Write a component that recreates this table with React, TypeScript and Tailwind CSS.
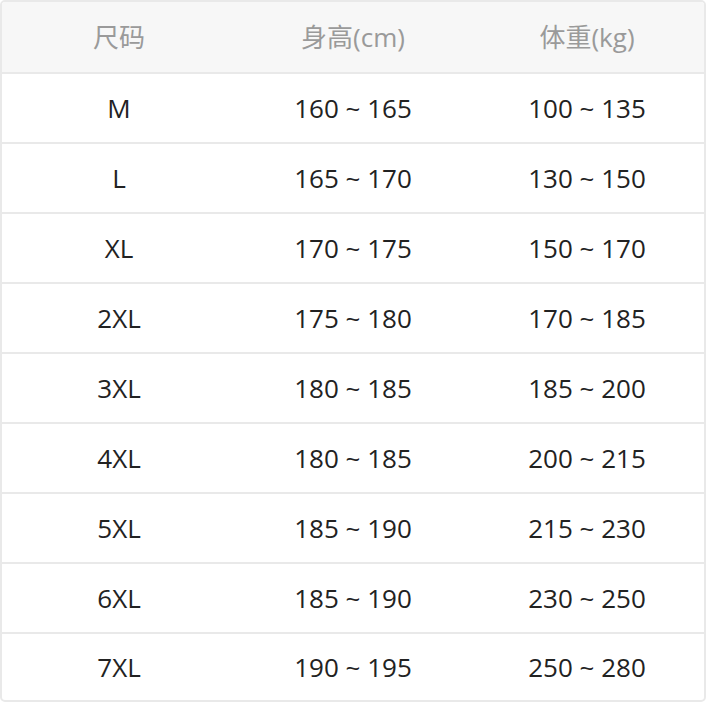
import React from "react";

const rows: [string, string, string][] = [
  ["M", "160 ~ 165", "100 ~ 135"],
  ["L", "165 ~ 170", "130 ~ 150"],
  ["XL", "170 ~ 175", "150 ~ 170"],
  ["2XL", "175 ~ 180", "170 ~ 185"],
  ["3XL", "180 ~ 185", "185 ~ 200"],
  ["4XL", "180 ~ 185", "200 ~ 215"],
  ["5XL", "185 ~ 190", "215 ~ 230"],
  ["6XL", "185 ~ 190", "230 ~ 250"],
  ["7XL", "190 ~ 195", "250 ~ 280"],
];

export default function App() {
  return (
    <div
      className="w-[706px] h-[702px] bg-white"
      style={{ fontFamily: '"Open Sans", "Noto Sans CJK SC", sans-serif' }}
    >
      <div className="h-[702px] border-2 border-[#e9e9e9] rounded-[5px] overflow-hidden flex flex-col">
        <div className="h-[70px] shrink-0 bg-[#f7f7f7] grid grid-cols-3 items-center text-[26px] text-[#9a9a9a]">
          <div className="text-center">尺码</div>
          <div className="text-center">身高(cm)</div>
          <div className="text-center">体重(kg)</div>
        </div>
        {rows.map((r, i) => (
          <div
            key={i}
            className={`${i === rows.length - 1 ? "h-[68px]" : "h-[70px]"} shrink-0 border-t-2 border-[#e9e9e9] grid grid-cols-3 items-center text-[26px] text-[#222]`}
          >
            <div className="text-center">{r[0]}</div>
            <div className="text-center">{r[1]}</div>
            <div className="text-center">{r[2]}</div>
          </div>
        ))}
      </div>
    </div>
  );
}
